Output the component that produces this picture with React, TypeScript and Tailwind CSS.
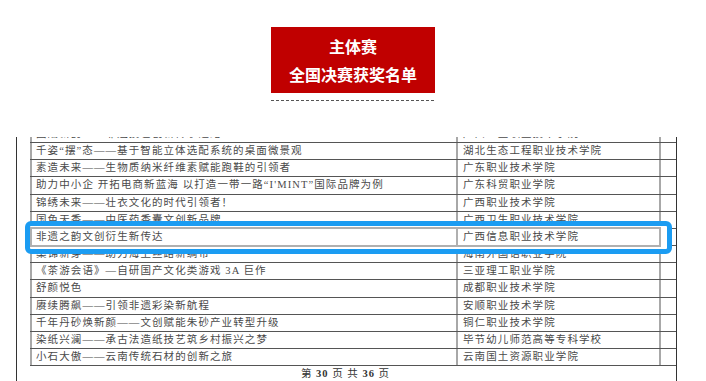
import React from "react";

const rows: [string, string][] = [
  ["千姿“摆”态——基于智能立体选配系统的桌面微景观", "湖北生态工程职业技术学院"],
  ["素造未来——生物质纳米纤维素赋能跑鞋的引领者", "广东职业技术学院"],
  ["助力中小企 开拓电商新蓝海 以打造一带一路“I'MINT”国际品牌为例", "广东科贸职业学院"],
  ["锦绣未来——壮衣文化的时代引领者！", "广西职业技术学院"],
  ["国色天香——中医药香囊文创新品牌", "广西卫生职业技术学院"],
  ["非遗之韵文创衍生新传达", "广西信息职业技术学院"],
  ["桑锦新芽——助力海上丝路新绸带", "海南外国语职业学院"],
  ["《茶游会语》—自研国产文化类游戏 3A 巨作", "三亚理工职业学院"],
  ["舒颜悦色", "成都职业技术学院"],
  ["赓续腾飙——引领非遗彩染新航程", "安顺职业技术学院"],
  ["千年丹砂焕新颜——文创赋能朱砂产业转型升级", "铜仁职业技术学院"],
  ["染纸兴澜——承古法造纸技艺筑乡村振兴之梦", "毕节幼儿师范高等专科学校"],
  ["小石大傲——云南传统石材的创新之旅", "云南国土资源职业学院"],
];

function Row({ left, right, first }: { left: string; right: string; first?: boolean }) {
  return (
    <div
      className={
        "flex h-[17.17px] border-b border-[#555555] " + (first ? "mt-[-11px]" : "")
      }
    >
      <div className="w-[426px] shrink-0 border-l-2 border-[#a8a8a8] pl-[4px] leading-[16px] whitespace-nowrap overflow-hidden">
        {left}
      </div>
      <div className="w-[205px] shrink-0 border-l-2 border-r-2 border-[#a8a8a8] pl-[5px] leading-[16px] whitespace-nowrap overflow-hidden">
        {right}
      </div>
    </div>
  );
}

export default function App() {
  return (
    <div
      className="relative w-[706px] h-[381px] bg-white overflow-hidden flex flex-col"
      style={{ fontFamily: '"Liberation Serif", "Noto Sans CJK SC", serif' }}
    >
      {/* Header */}
      <div className="flex flex-col items-center pt-[27px]">
        <div
          className="w-[164px] h-[66px] bg-[#c00000] text-white font-bold text-[16px] leading-[28px] flex flex-col items-center justify-center"
          style={{ fontFamily: '"Noto Sans CJK SC", sans-serif' }}
        >
          <div>主体赛</div>
          <div>全国决赛获奖名单</div>
        </div>
        <div className="mt-[7px] w-[164px] h-px bg-[repeating-linear-gradient(90deg,#555555_0px,#555555_3px,transparent_3px,transparent_5px)]" />
      </div>

      {/* Page body */}
      <div className="mt-[36px] ml-[16px] w-[661px] flex-1 border-l border-r border-[#333333] overflow-hidden">
        <div className="pl-[13px] text-[10.5px] tracking-[1.1px] text-[#4a4a4a]">
          <Row left="国潮新韵——非遗技艺创新传承之路" right="广西工业职业技术学院" first />
          {rows.map(([l, r], i) => (
            <Row key={i} left={l} right={r} />
          ))}
          <div className="w-[631px] h-[15px] leading-[15px] text-center text-[10.5px] text-[#333333] tracking-[1px]">
            第 <span className="font-bold">30</span> 页 共 <span className="font-bold">36</span> 页
          </div>
        </div>
      </div>

      {/* Highlight overlay */}
      <div className="absolute left-[25px] top-[221px] w-[647px] h-[33px] border-[5px] border-[#1b9cf2] rounded-[6px] bg-white">
        <div className="mt-[1px] flex h-[20px] w-[631px] border-y-2 border-[#b0b0b0] text-[10.5px] tracking-[1.1px] text-[#4a4a4a]">
          <div className="w-[426px] shrink-0 border-l-2 border-[#b0b0b0] pl-[4px] leading-[16px] whitespace-nowrap">
            非遗之韵文创衍生新传达
          </div>
          <div className="w-[205px] shrink-0 border-l-2 border-r-2 border-[#b0b0b0] pl-[5px] leading-[16px] whitespace-nowrap">
            广西信息职业技术学院
          </div>
        </div>
      </div>
    </div>
  );
}
